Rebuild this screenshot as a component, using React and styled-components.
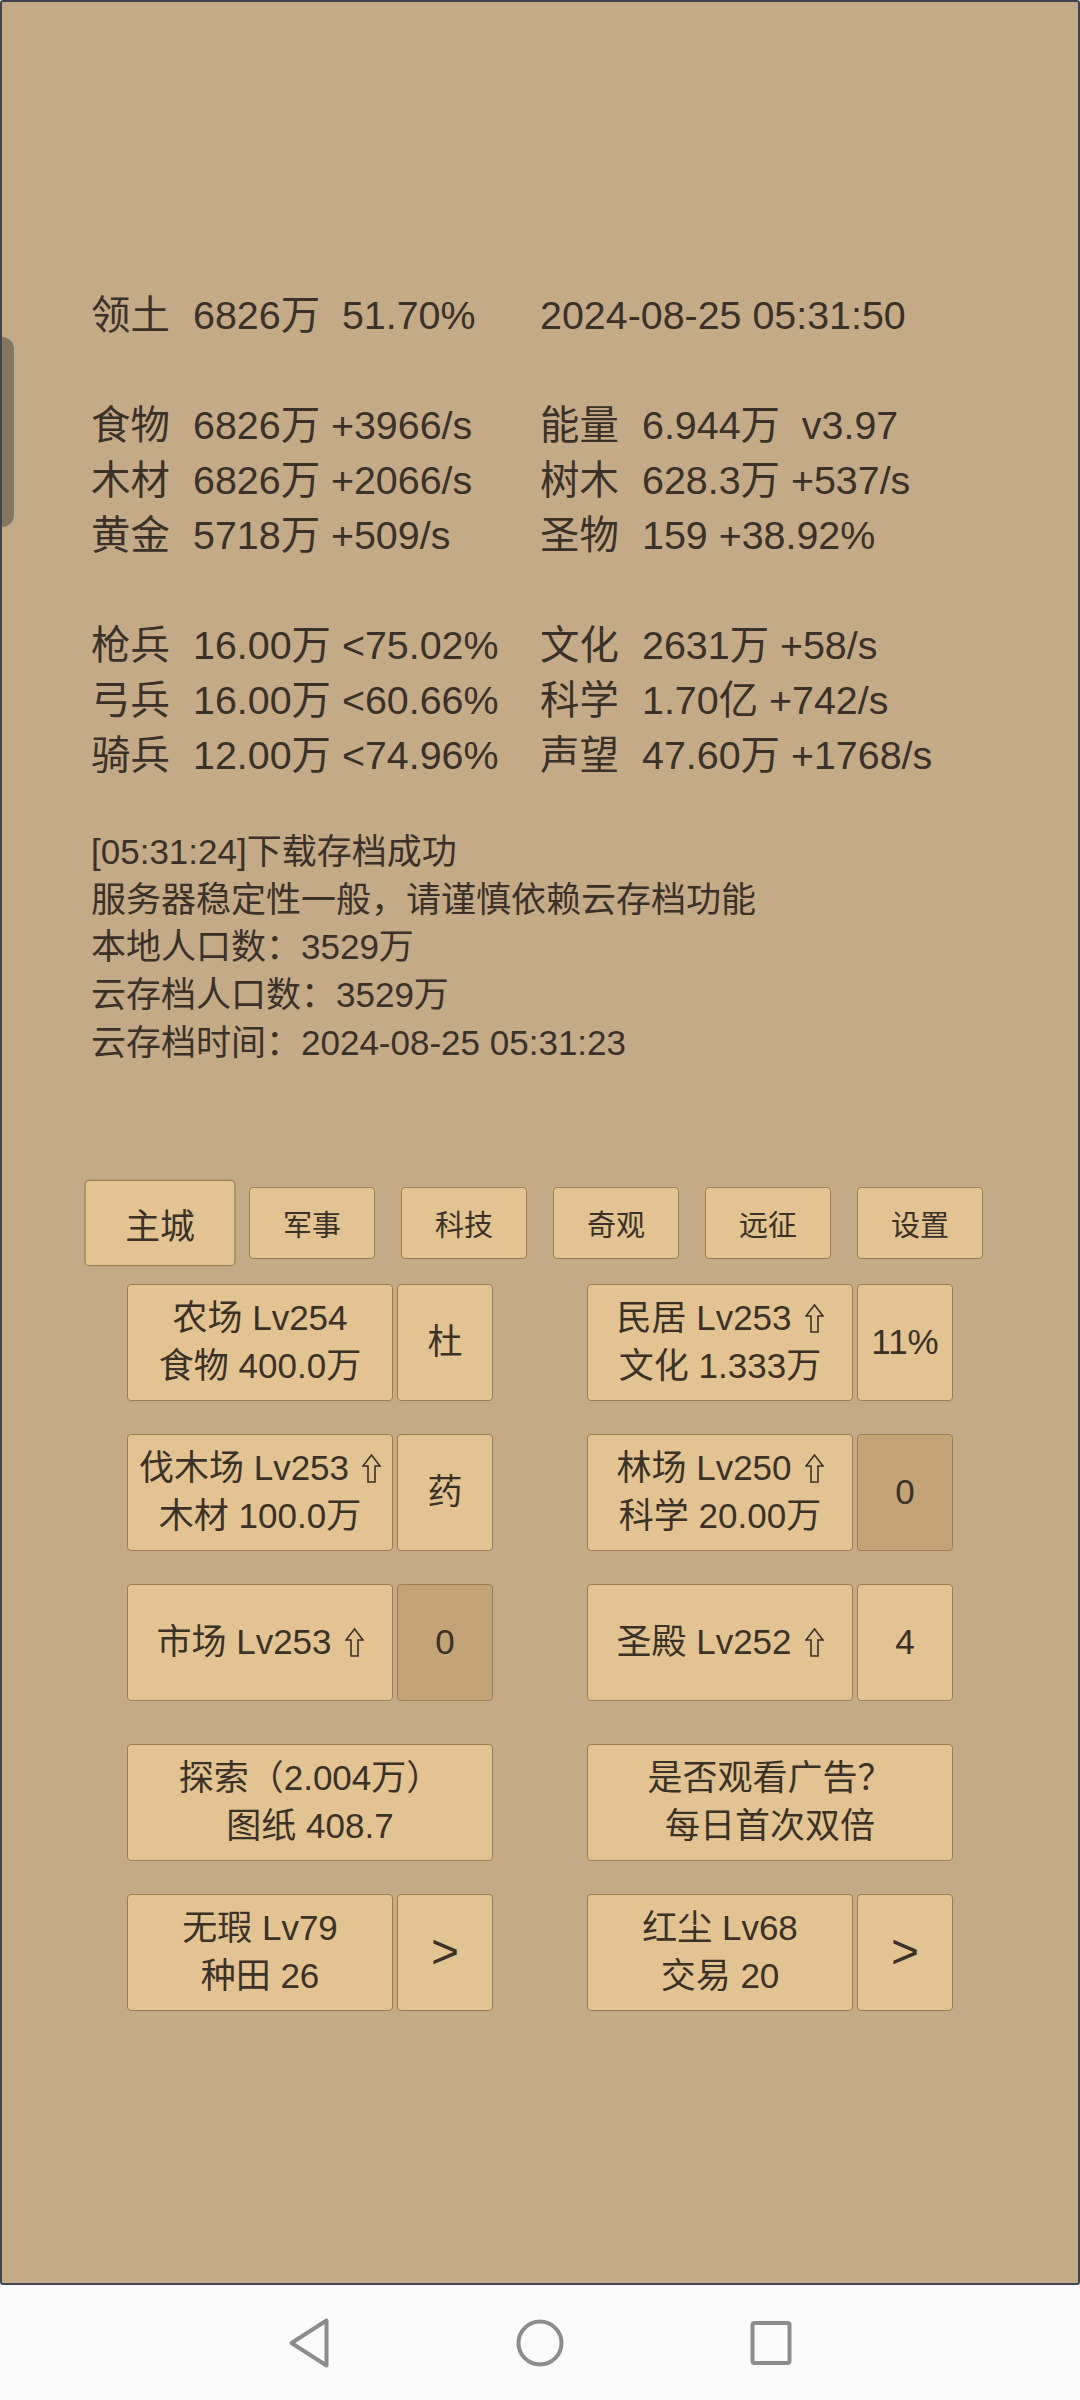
import styled, { createGlobalStyle } from 'styled-components'

const GlobalStyle = createGlobalStyle`
  html, body {
    margin: 0;
    padding: 0;
    background: #fafafa;
  }
  body {
    font-family: "Liberation Sans", "Noto Sans CJK SC", sans-serif;
    color: #3b3128;
  }
`

const Screen = styled.div`
  width: 1080px;
  height: 2400px;
  display: flex;
  flex-direction: column;
`

const Frame = styled.div`
  position: relative;
  box-sizing: border-box;
  height: 2285px;
  flex: none;
  background: #c4aa86;
  border: 2px solid #3e4451;
  border-radius: 3px;
`

const SideHandle = styled.div`
  position: absolute;
  left: 0;
  top: 335px;
  width: 12px;
  height: 190px;
  background: #867560;
  border-radius: 0 12px 12px 0;
  box-shadow: 1px 0 0 #aab0a4;
`

const Info = styled.div`
  padding: 286px 0 0 89px;
`

const StatGroup = styled.div`
  display: grid;
  grid-template-columns: 449px auto;
  font-size: 39.4px;
  line-height: 55px;
  & + & {
    margin-top: 55px;
  }
`

const Stat = styled.div`
  display: flex;
  white-space: pre;
`

const Label = styled.span`
  width: 102px;
  flex: none;
`

const Log = styled.div`
  margin-top: 45px;
  font-size: 35px;
  line-height: 47.7px;
`

const Tabs = styled.div`
  display: flex;
  justify-content: center;
  gap: 26px;
  margin-top: 120px;
`

const Tab = styled.div`
  box-sizing: border-box;
  width: 126px;
  height: 72px;
  display: flex;
  align-items: center;
  justify-content: center;
  font-size: 29px;
  background: #e2c391;
  border: 1.5px solid #9c7c50;
  border-radius: 4px;
  transform: ${p => (p.$active ? 'scale(1.2)' : 'none')};
`

const Buildings = styled.div`
  display: grid;
  grid-template-columns: 366px 366px;
  column-gap: 94px;
  row-gap: 33px;
  justify-content: center;
  margin-top: 25px;
`

const Cell = styled.div`
  display: flex;
  gap: 4px;
  height: 117px;
  margin-top: ${p => (p.$extra ? '10px' : '0')};
`

const Btn = styled.div`
  box-sizing: border-box;
  width: ${p => p.$w}px;
  flex: none;
  display: flex;
  flex-direction: column;
  align-items: center;
  justify-content: center;
  text-align: center;
  white-space: nowrap;
  font-size: ${p => (p.$big ? '48px' : '35px')};
  line-height: 47.6px;
  background: ${p => (p.$dim ? '#c4a477' : '#e2c391')};
  border: 1.5px solid #9c7c50;
  border-radius: 4px;
`

const Line = styled.div`
  display: flex;
  align-items: center;
`

const Arrow = styled.svg`
  margin-left: 13px;
  flex: none;
`

const NavBar = styled.nav`
  flex: 1;
  background: #fafafa;
  display: flex;
  align-items: center;
  justify-content: center;
  gap: 181px;
`

function UpArrow() {
  return (
    <Arrow width="19" height="29" viewBox="0 0 19 29">
      <path d="M9.5 1 L18 12 L13 12 L13 28 L6 28 L6 12 L1 12 Z" fill="none" stroke="#3b3128" strokeWidth="1.6" />
    </Arrow>
  )
}

const groups = [
  [
    ['领土', '6826万  51.70%'],
    ['', '2024-08-25 05:31:50'],
  ],
  [
    ['食物', '6826万 +3966/s'],
    ['能量', '6.944万  v3.97'],
    ['木材', '6826万 +2066/s'],
    ['树木', '628.3万 +537/s'],
    ['黄金', '5718万 +509/s'],
    ['圣物', '159 +38.92%'],
  ],
  [
    ['枪兵', '16.00万 <75.02%'],
    ['文化', '2631万 +58/s'],
    ['弓兵', '16.00万 <60.66%'],
    ['科学', '1.70亿 +742/s'],
    ['骑兵', '12.00万 <74.96%'],
    ['声望', '47.60万 +1768/s'],
  ],
]

const logLines = [
  '[05:31:24]下载存档成功',
  '服务器稳定性一般，请谨慎依赖云存档功能',
  '本地人口数：3529万',
  '云存档人口数：3529万',
  '云存档时间：2024-08-25 05:31:23',
]

const tabs = ['主城', '军事', '科技', '奇观', '远征', '设置']

const buildings = [
  { lines: ['农场 Lv254', '食物 400.0万'], side: '杜' },
  { lines: ['民居 Lv253', '文化 1.333万'], up: true, side: '11%' },
  { lines: ['伐木场 Lv253', '木材 100.0万'], up: true, side: '药' },
  { lines: ['林场 Lv250', '科学 20.00万'], up: true, side: '0', dim: true },
  { lines: ['市场 Lv253'], up: true, side: '0', dim: true },
  { lines: ['圣殿 Lv252'], up: true, side: '4' },
]

function App() {
  return (
    <>
      <GlobalStyle />
      <Screen>
        <Frame>
          <SideHandle />
          <Info>
            {groups.map((g, i) => (
              <StatGroup key={i}>
                {g.map(([label, value], j) => (
                  <Stat key={j}>
                    {label && <Label>{label}</Label>}
                    <span>{value}</span>
                  </Stat>
                ))}
              </StatGroup>
            ))}
            <Log>
              {logLines.map(l => (
                <div key={l}>{l}</div>
              ))}
            </Log>
          </Info>

          <Tabs>
            {tabs.map((t, i) => (
              <Tab key={t} $active={i === 0}>{t}</Tab>
            ))}
          </Tabs>

          <Buildings>
            {buildings.map((b, i) => (
              <Cell key={i}>
                <Btn $w={266}>
                  {b.lines.map((l, k) => (
                    <Line key={k}>
                      {l}
                      {k === 0 && b.up && <UpArrow />}
                    </Line>
                  ))}
                </Btn>
                <Btn $w={96} $dim={b.dim}>{b.side}</Btn>
              </Cell>
            ))}
            <Cell $extra>
              <Btn $w={366}>
                <Line>探索（2.004万）</Line>
                <Line>图纸 408.7</Line>
              </Btn>
            </Cell>
            <Cell $extra>
              <Btn $w={366}>
                <Line>是否观看广告？</Line>
                <Line>每日首次双倍</Line>
              </Btn>
            </Cell>
            <Cell>
              <Btn $w={266}>
                <Line>无瑕 Lv79</Line>
                <Line>种田 26</Line>
              </Btn>
              <Btn $w={96} $big>&gt;</Btn>
            </Cell>
            <Cell>
              <Btn $w={266}>
                <Line>红尘 Lv68</Line>
                <Line>交易 20</Line>
              </Btn>
              <Btn $w={96} $big>&gt;</Btn>
            </Cell>
          </Buildings>
        </Frame>

        <NavBar>
          <svg width="50" height="54" viewBox="0 0 50 54">
            <path d="M42.5 4.5 L7.5 27 L42.5 49.5 Z" fill="none" stroke="#8c8c8c" strokeWidth="4" strokeLinejoin="round" />
          </svg>
          <svg width="50" height="54" viewBox="0 0 50 54">
            <circle cx="25" cy="27" r="21.5" fill="none" stroke="#8c8c8c" strokeWidth="4" />
          </svg>
          <svg width="50" height="54" viewBox="0 0 50 54">
            <rect x="6.5" y="7" width="37" height="40" rx="2" fill="none" stroke="#8c8c8c" strokeWidth="4" />
          </svg>
        </NavBar>
      </Screen>
    </>
  )
}

export default App
